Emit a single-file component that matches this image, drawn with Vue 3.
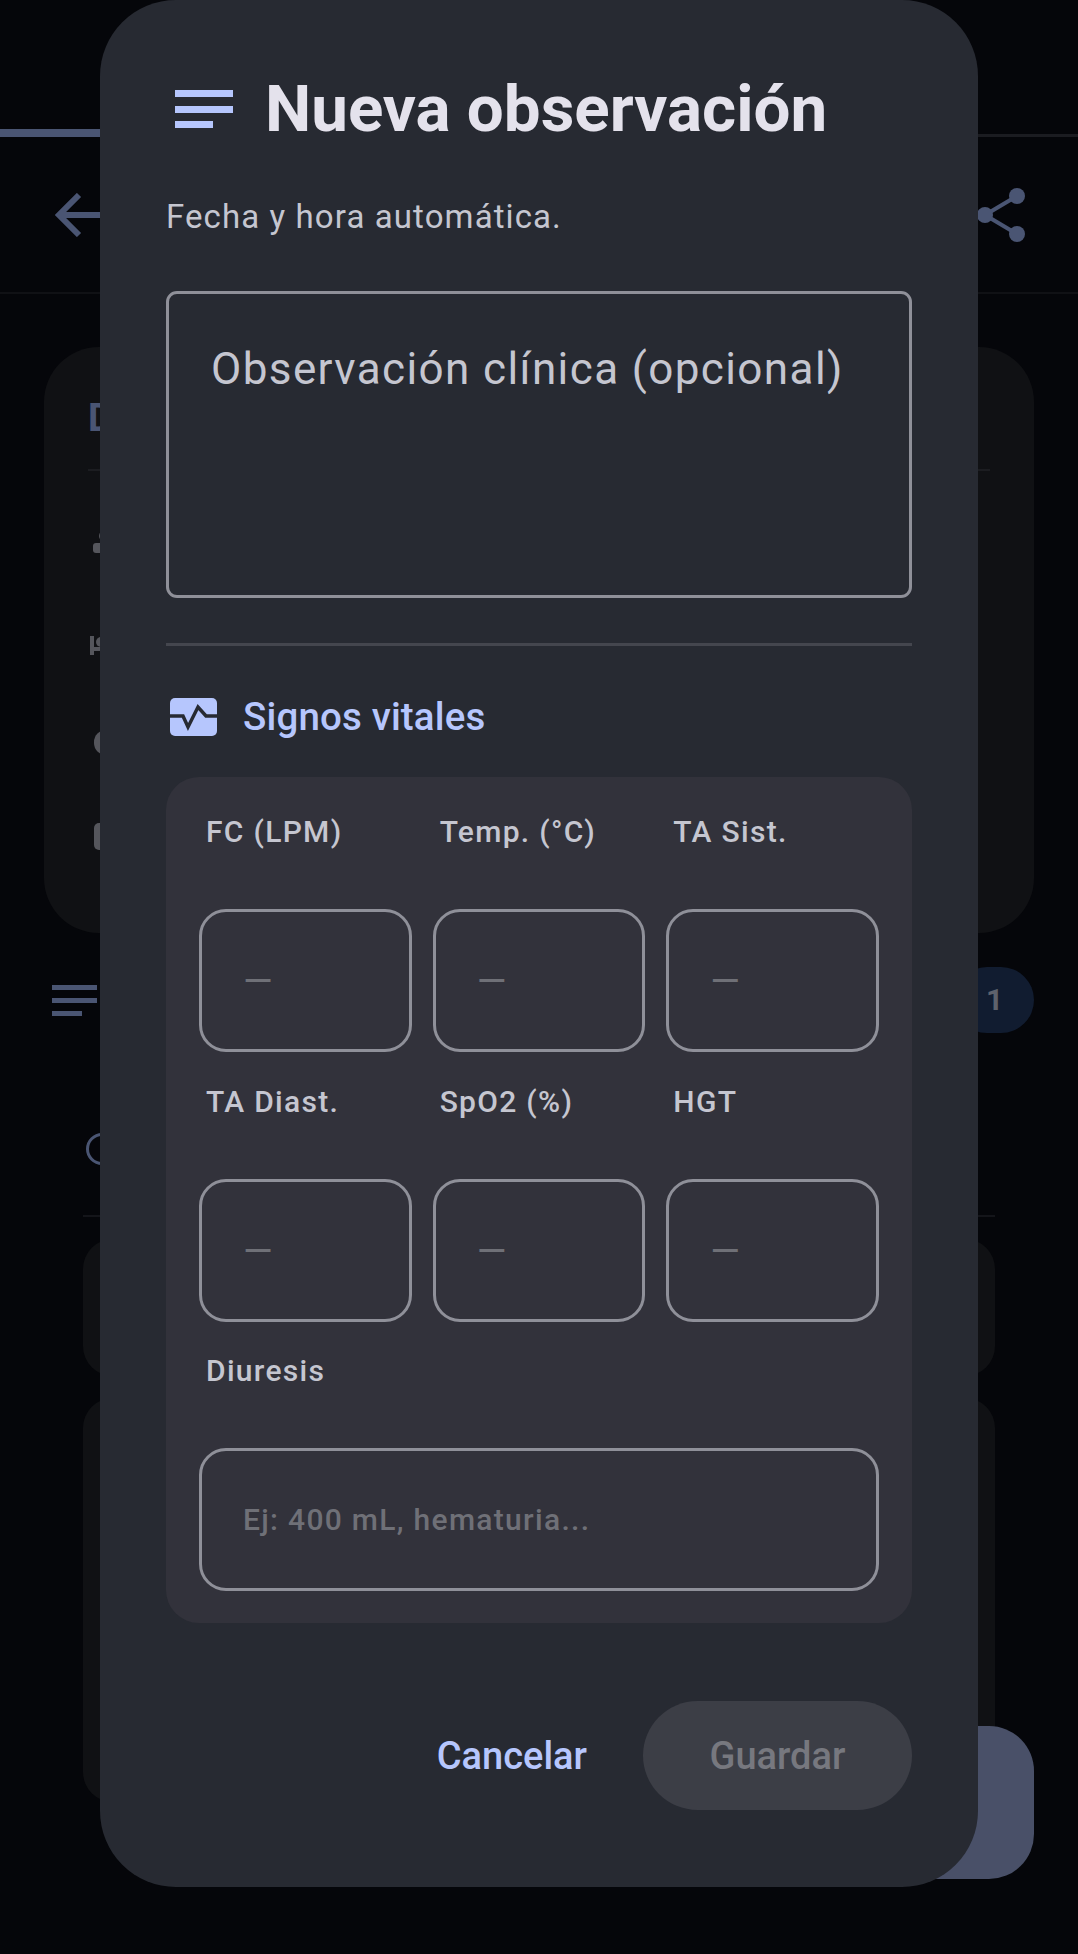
<template>
  <div class="page">
    <!-- dimmed screen behind the dialog -->
    <div class="track"><div class="track-fill"></div></div>

    <header class="toolbar">
      <svg class="back" viewBox="0 0 48 44" aria-hidden="true">
        <path d="M46 22H4M24 2 4 22l20 20" fill="none" stroke="currentColor" stroke-width="6" />
      </svg>
      <svg class="share" viewBox="0 0 48 56" aria-hidden="true">
        <path d="M7 28 39 9M7 28l32 19" fill="none" stroke="currentColor" stroke-width="4" />
        <circle cx="7" cy="28" r="8" fill="currentColor" />
        <circle cx="39" cy="9" r="8" fill="currentColor" />
        <circle cx="39" cy="47" r="8" fill="currentColor" />
      </svg>
    </header>

    <section class="bg-card">
      <div class="bg-card-title">D</div>
      <div class="bg-card-line"></div>
      <div class="bg-card-icons">
        <svg class="bg-ico person" viewBox="0 0 24 24" aria-hidden="true">
          <circle cx="12" cy="6" r="6" />
          <rect y="13" width="24" height="10" rx="3" />
        </svg>
        <svg class="bg-ico bed" viewBox="0 0 24 19" aria-hidden="true">
          <rect width="4" height="19" />
          <rect y="11" width="24" height="4" />
          <circle cx="11" cy="6" r="5" />
        </svg>
        <span class="bg-ico shield"></span>
        <span class="bg-ico box"></span>
      </div>
    </section>

    <div class="bg-row">
      <div class="bg-lines"><i></i><i></i><i class="short"></i></div>
      <div class="bg-badge">1</div>
    </div>

    <div class="bg-filter"><span class="bg-circle"></span></div>
    <div class="bg-list">
      <div class="bg-item small"></div>
      <div class="bg-item large"></div>
    </div>

    <div class="fab"></div>

    <!-- dialog -->
    <section class="dialog" role="dialog" aria-label="Nueva observación">
      <div class="title-row">
        <div class="title-ico"><i></i><i></i><i class="short"></i></div>
        <h1 class="title">Nueva observación</h1>
      </div>
      <p class="sub">Fecha y hora automática.</p>

      <div class="note">Observación clínica (opcional)</div>
      <div class="divider"></div>

      <div class="vitals-head">
        <svg class="vitals-ico" viewBox="0 0 47 38" aria-hidden="true">
          <rect width="47" height="38" rx="5" fill="#b6c6fd" />
          <path d="M0 18h13l5 11 10-20 8 9h11" fill="none" stroke="#272a32" stroke-width="3.5" />
        </svg>
        <span class="vitals-title">Signos vitales</span>
      </div>

      <div class="vitals">
        <div class="grid">
          <div v-for="f in fields" :key="f.label" class="cell" :class="{ wide: f.wide }">
            <div class="cell-label">{{ f.label }}</div>
            <div class="cell-input">{{ f.hint }}</div>
          </div>
        </div>
      </div>

      <footer class="actions">
        <button class="btn-text" type="button">Cancelar</button>
        <button class="btn-save" type="button" disabled>Guardar</button>
      </footer>
    </section>
  </div>
</template>

<script setup>
const fields = [
  { label: "FC (LPM)", hint: "—" },
  { label: "Temp. (°C)", hint: "—" },
  { label: "TA Sist.", hint: "—" },
  { label: "TA Diast.", hint: "—" },
  { label: "SpO2 (%)", hint: "—" },
  { label: "HGT", hint: "—" },
  { label: "Diuresis", hint: "Ej: 400 mL, hematuria...", wide: true },
];
</script>

<style>
html,
body {
  margin: 0;
  background: #05060a;
}
</style>

<style scoped>
.page {
  position: relative;
  width: 1078px;
  height: 1954px;
  overflow: hidden;
  background: #05060a;
  font-family: Roboto, "Noto Sans", sans-serif;
}

/* ===== Background screen ===== */
.track {
  height: 3px;
  margin-top: 134px;
  background: #1b1c21;
}
.track-fill {
  width: 100px;
  height: 8px;
  transform: translateY(-5px);
  background: #4a5573;
}

.toolbar {
  height: 157px;
  display: flex;
  align-items: center;
  justify-content: space-between;
  padding: 0 52px 0 55px;
  box-sizing: border-box;
  border-bottom: 2px solid #101115;
  color: #4a5573;
}
.back {
  width: 48px;
  height: 44px;
}
.share {
  width: 48px;
  height: 56px;
}

.bg-card {
  margin: 53px 44px 0;
  height: 586px;
  padding: 56px 44px 0;
  box-sizing: border-box;
  border-radius: 55px;
  background: #101114;
}
.bg-card-title {
  height: 30px;
  font-size: 38px;
  line-height: 30px;
  font-weight: 700;
  color: #4a5573;
}
.bg-card-line {
  height: 2px;
  margin-top: 36px;
  background: #1c1d21;
}
.bg-card-icons {
  display: flex;
  flex-direction: column;
  align-items: flex-start;
  margin-top: 59px;
}
.bg-ico {
  display: block;
  width: 24px;
  fill: #55565c;
  background: #55565c;
}
.bg-ico.person {
  height: 24px;
  margin-left: 5px;
  background: none;
}
.bg-ico.bed {
  height: 19px;
  margin-top: 82px;
  margin-left: 2px;
  background: none;
}
.bg-ico.shield {
  height: 25px;
  margin-top: 75px;
  margin-left: 6px;
  border-radius: 12px 0 0 12px;
}
.bg-ico.box {
  height: 27px;
  margin-top: 68px;
  margin-left: 6px;
  border-radius: 5px;
}

.bg-row {
  display: flex;
  align-items: center;
  justify-content: space-between;
  height: 66px;
  margin: 34px 44px 0 52px;
}
.bg-lines {
  display: flex;
  flex-direction: column;
  gap: 8px;
  width: 45px;
}
.bg-lines i {
  display: block;
  height: 5px;
  background: #4a5573;
}
.bg-lines i.short {
  width: 30px;
}
.bg-badge {
  width: 80px;
  height: 66px;
  padding-left: 32px;
  box-sizing: border-box;
  border-radius: 33px;
  background: #111c30;
  color: #5e626c;
  font-size: 30px;
  font-weight: 700;
  line-height: 66px;
}

.bg-filter {
  height: 82px;
  margin: 0 83px;
  padding-top: 100px;
  border-bottom: 2px solid #14151a;
}
.bg-circle {
  display: block;
  width: 32px;
  height: 32px;
  margin-left: 3px;
  border: 3px solid #4a5573;
  border-radius: 50%;
  box-sizing: border-box;
}

.bg-list {
  display: flex;
  flex-direction: column;
  gap: 22px;
  margin: 22px 83px 0;
}
.bg-item {
  border-radius: 30px;
  background: #101114;
}
.bg-item.small {
  height: 137px;
}
.bg-item.large {
  height: 404px;
}

.fab {
  position: absolute;
  right: 44px;
  top: 1726px;
  width: 200px;
  height: 153px;
  border-radius: 45px;
  background: #495068;
}

/* ===== Dialog ===== */
.dialog {
  position: absolute;
  left: 100px;
  top: 0;
  width: 878px;
  height: 1887px;
  padding: 0 66px;
  box-sizing: border-box;
  display: flex;
  flex-direction: column;
  border-radius: 76px;
  background: #272a32;
}

.title-row {
  display: flex;
  align-items: center;
  gap: 32px;
  height: 72px;
  margin-top: 73px;
  padding-left: 9px;
}
.title-ico {
  display: flex;
  flex-direction: column;
  gap: 8.5px;
  width: 58px;
}
.title-ico i {
  display: block;
  height: 7px;
  background: #b6c6fd;
}
.title-ico i.short {
  width: 38px;
}
.title {
  margin: 0;
  font-size: 65.5px;
  line-height: 72px;
  font-weight: 700;
  color: #e4e2ec;
}

.sub {
  margin: 52px 0 0;
  font-size: 33px;
  line-height: 40px;
  letter-spacing: 1.1px;
  color: #c5c6d0;
}

.note {
  height: 307px;
  margin-top: 54px;
  padding: 49px 42px 0;
  box-sizing: border-box;
  border: 3px solid #8f9099;
  border-radius: 11px;
  font-size: 44px;
  line-height: 52px;
  letter-spacing: 1.4px;
  color: #c5c6d0;
}

.divider {
  height: 3px;
  margin-top: 45px;
  background: #44464e;
}

.vitals-head {
  display: flex;
  align-items: center;
  gap: 26px;
  height: 38px;
  margin-top: 52px;
  padding-left: 4px;
}
.vitals-ico {
  width: 47px;
  height: 38px;
}
.vitals-title {
  font-size: 38.5px;
  line-height: 38px;
  font-weight: 500;
  letter-spacing: 0.15px;
  color: #b6c6fd;
}

.vitals {
  height: 846px;
  margin-top: 41px;
  padding: 33px 33px 0;
  box-sizing: border-box;
  border-radius: 33px;
  background: #32323b;
}
.grid {
  display: grid;
  grid-template-columns: repeat(3, 1fr);
  gap: 27.5px 21px;
}
.cell.wide {
  grid-column: 1 / -1;
}
.cell-label {
  height: 44px;
  padding-left: 7px;
  font-size: 30px;
  line-height: 44px;
  font-weight: 500;
  letter-spacing: 1.3px;
  color: #c5c6d0;
}
.cell-input {
  height: 143px;
  margin-top: 55px;
  padding-left: 41px;
  box-sizing: border-box;
  border: 3px solid #8f9099;
  border-radius: 27px;
  font-size: 38px;
  line-height: 139px;
  color: #6f7077;
}
.cell.wide .cell-input {
  font-size: 30px;
  font-weight: 500;
  letter-spacing: 1.3px;
  line-height: 137px;
}

.actions {
  display: flex;
  align-items: center;
  justify-content: flex-end;
  gap: 56px;
  margin-top: 78px;
}
.btn-text {
  padding: 0;
  border: 0;
  background: transparent;
  font-family: inherit;
  font-size: 38px;
  font-weight: 500;
  color: #b6c6fd;
}
.btn-save {
  width: 269px;
  height: 109px;
  padding: 0;
  border: 0;
  border-radius: 55px;
  background: #3c3e46;
  font-family: inherit;
  font-size: 38px;
  font-weight: 500;
  color: #77787f;
}
</style>
